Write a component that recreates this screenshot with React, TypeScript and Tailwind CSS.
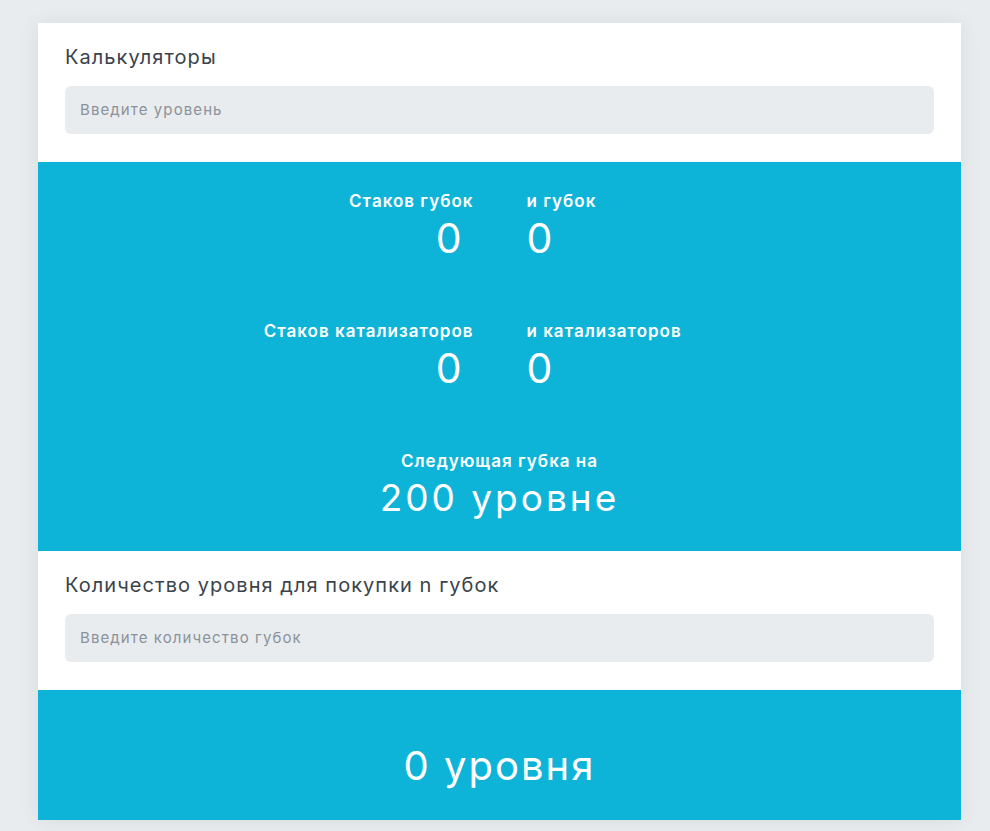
import React from "react";

const font = { fontFamily: "Inter, 'Noto Sans', sans-serif" };

function Stat({ label, value, left }: { label: string; value: string; left: boolean }) {
  return (
    <div className={left ? "flex flex-col items-end pr-[26px]" : "flex flex-col items-start pl-[27px]"}>
      <div className="h-[20px] text-[17px] leading-[20px] font-semibold tracking-[1px] text-white whitespace-nowrap">{label}</div>
      <div className={"mt-[5px] h-[44px] text-[41px] leading-[44px] font-normal text-white " + (left ? "pr-[12px]" : "")}>{value}</div>
    </div>
  );
}

export default function App() {
  return (
    <div className="min-h-[831px] bg-[#e9ecef] pt-[23px]" style={font}>
      <div className="ml-[38px] w-[923px] bg-white shadow-[0_0_20px_rgba(0,0,0,0.07)]">
        <div className="px-[27px] pt-[22px] pb-[28px]">
          <div className="h-[24px] text-[20px] leading-[24px] tracking-[1.05px] text-[#3a434b]">Калькуляторы</div>
          <div className="mt-[17px] flex h-[48px] items-center rounded-[6px] bg-[#e9ecef] px-[15px] text-[15px] tracking-[1.1px] text-[#8a9299]">
            Введите уровень
          </div>
        </div>
        <div className="bg-[#0eb4d8] pt-[29px] pb-[31px]">
          <div className="grid grid-cols-2">
            <Stat left label="Стаков губок" value="0" />
            <Stat left={false} label="и губок" value="0" />
          </div>
          <div className="mt-[61px] grid grid-cols-2">
            <Stat left label="Стаков катализаторов" value="0" />
            <Stat left={false} label="и катализаторов" value="0" />
          </div>
          <div className="mt-[61px] flex flex-col items-center">
            <div className="h-[20px] text-[17px] leading-[20px] font-semibold tracking-[1px] text-white">Следующая губка на</div>
            <div className="mt-[5px] h-[44px] text-[37px] leading-[44px] tracking-[3px] text-white">200 уровне</div>
          </div>
        </div>
        <div className="px-[27px] pt-[22px] pb-[28px]">
          <div className="h-[24px] text-[20px] leading-[24px] tracking-[1.05px] text-[#3a434b]">Количество уровня для покупки n губок</div>
          <div className="mt-[17px] flex h-[48px] items-center rounded-[6px] bg-[#e9ecef] px-[15px] text-[15px] tracking-[1.1px] text-[#8a9299]">
            Введите количество губок
          </div>
        </div>
        <div className="bg-[#0eb4d8] pt-[29px] pb-[32px]">
          <div className="flex flex-col items-center">
            <div className="h-[20px]"></div>
            <div className="mt-[5px] h-[44px] text-[40px] leading-[44px] tracking-[2px] text-white">0 уровня</div>
          </div>
        </div>
      </div>
    </div>
  );
}
